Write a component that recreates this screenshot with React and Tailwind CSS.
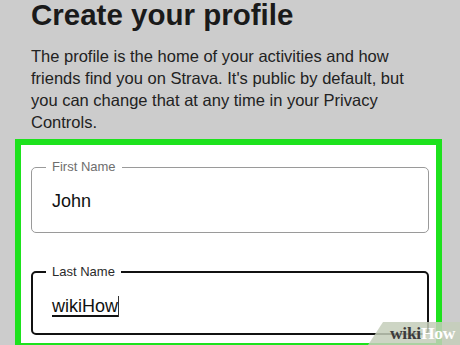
import React from 'react';

const font = { fontFamily: '"Liberation Sans", Arial, sans-serif' };

function Field({ label, value, focused }) {
  return (
    <fieldset
      className={`rounded-[5px] pl-[14px] pr-4 pt-[14px] ${
        focused ? 'border-2 border-[#111] pb-[15px]' : 'border border-[#9a9a9a] pb-[19px]'
      }`}
    >
      <legend
        className={`px-[6px] text-[13px] leading-[16px] ${focused ? 'text-[#2a2a2a] -ml-px' : 'text-[#6e6e6e]'}`}
      >
        {label}
      </legend>
      <div className={`pl-[6px] text-[18px] leading-[24px] text-[#111] ${focused ? '-ml-px' : ''}`}>
        {focused ? (
          <>
            <span className="underline decoration-[1.5px] underline-offset-[3px]">{value}</span>
            <span className="inline-block w-px h-[21px] bg-[#333] align-[-5px]" />
          </>
        ) : (
          value
        )}
      </div>
    </fieldset>
  );
}

export default function App() {
  return (
    <div className="relative w-[460px] h-[345px] overflow-hidden bg-[#cccccc]" style={font}>
      <div className="pl-[31px]">
        <h1 className="text-[29.5px] leading-[30px] font-bold text-[#1a1a1a]">Create your profile</h1>
        <p className="mt-[15px] w-[385px] text-[16.5px] leading-[22px] text-[#222]">
          The profile is the home of your activities and how friends find you on Strava. It's public by
          default, but you can change that at any time in your Privacy Controls.
        </p>
      </div>

      <div className="ml-[15px] mt-[6px] w-[427px] h-[210px] border-[6px] border-[#1de21d] bg-white pl-[10px] pr-[7px] pt-[14px]">
        <div className="flex flex-col gap-[31px]">
          <Field label="First Name" value="John" />
          <Field label="Last Name" value="wikiHow" focused />
        </div>
      </div>

      {/* wikiHow watermark */}
      <div className="absolute right-0 bottom-0 w-[92px] h-[23px] bg-[rgba(196,206,186,0.85)] [clip-path:polygon(15px_0,100%_0,100%_100%,0_100%)] flex items-center justify-end pr-[5px]">
        <span
          className="text-[17.5px] leading-none font-bold tracking-[-0.3px]"
          style={{ fontFamily: '"Liberation Serif", "Times New Roman", serif' }}
        >
          <span className="text-[#3c3c3c]">wiki</span>
          <span className="text-white">How</span>
        </span>
      </div>
    </div>
  );
}
